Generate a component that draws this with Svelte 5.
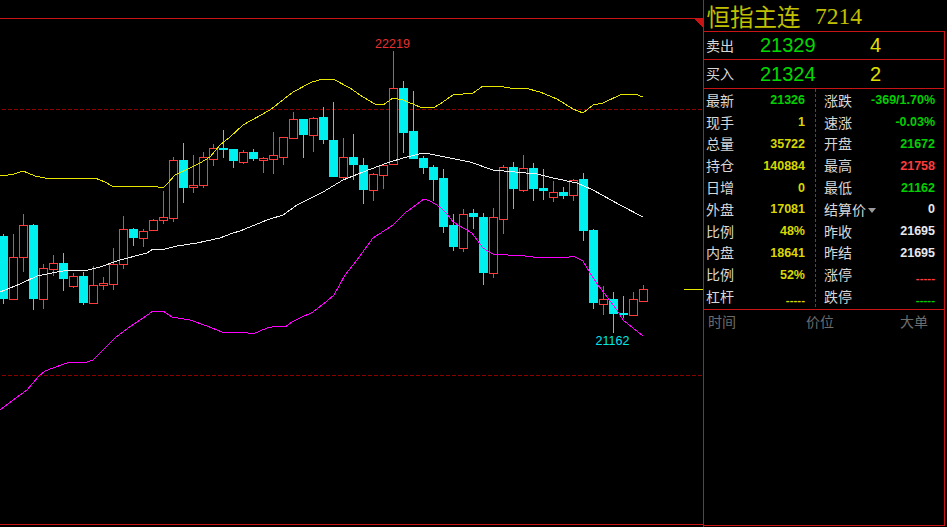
<script>
  // [x, isRed, wickTop, bodyTop, bodyBottom, wickBottom]
  const raw = [
    [3,0,234,236,299,304],[13,1,234,257,299,300],[23,1,214,225,257,272],[33,0,224,225,299,310],
    [43,1,264,268,299,309],[53,1,255,263,269,276],[63,0,253,263,279,291],[73,1,273,276,286,288],
    [83,0,272,276,303,305],[93,1,266,285,303,304],[103,1,277,283,285,290],[113,1,248,264,284,290],
    [123,1,216,229,264,269],[133,0,228,229,238,246],[143,1,229,231,238,247],[153,1,219,220,230,230],
    [163,1,191,217,220,224],[173,1,157,160,218,222],[183,0,143,160,188,203],[193,1,155,185,187,193],
    [203,1,152,157,185,188],[213,1,144,148,159,166],[223,0,130,148,150,158],[233,0,149,149,161,168],
    [243,1,150,152,162,164],[253,0,149,152,159,161],[263,1,157,158,160,173],[273,1,132,155,159,174],
    [283,1,137,137,157,165],[293,1,112,119,138,138],[303,0,119,119,135,158],[313,1,117,118,135,152],
    [323,0,107,117,140,144],[333,0,102,140,177,177],[343,1,138,157,177,179],[353,0,134,157,165,180],
    [363,0,158,165,190,204],[373,1,173,174,190,201],[383,1,164,165,175,189],[393,1,51,88,164,164],
    [403,0,81,88,133,153],[413,0,91,131,159,159],[423,0,156,158,168,174],[433,0,165,167,180,201],
    [443,0,169,178,227,233],[453,0,214,225,247,251],[463,1,209,214,248,252],[473,0,209,213,217,229],
    [483,0,213,217,273,285],[493,1,208,217,273,278],[503,1,165,167,219,234],[513,0,162,167,189,209],
    [523,1,155,168,190,192],[533,0,163,168,189,201],[543,0,169,188,191,200],[553,1,181,192,197,202],
    [563,0,187,192,196,199],[573,1,179,180,195,201],[583,0,173,179,231,241],[593,0,229,230,303,309],
    [603,1,286,299,304,315],[613,0,292,299,314,333],[623,0,296,313,315,318],[633,1,292,299,315,315],
    [643,1,285,289,301,301]
  ];
  const candles = raw.map(([x, red, wt, bt, bb, wb]) => ({ x, red: !!red, wt, bt, bb, wb }));

  const yellow = "0,175 8,175 14,174 23,171 35,176 45,178 60,178 95,178 105,182 112,186 128,186 158,187 163,188 168,183 175,175 190,168 200,163 210,157 220,145 230,137 243,125 270,110 293,92 312,82 323,79 333,79 350,88 363,97 375,104 383,105 393,98 403,100 420,107 433,108 440,104 453,95 473,93 483,86 498,86 510,88 525,88 540,92 557,99 573,109 583,113 593,105 603,103 622,94 635,94 643,97";
  const white = "0,292 20,284 37,276 57,272 70,270 88,270 100,267 120,260 147,253 153,249 165,249 177,246 197,243 220,238 233,233 240,231 267,220 283,215 297,205 323,192 343,180 363,172 387,163 403,158 423,153 430,154 450,158 470,162 493,170 537,174 553,178 577,183 593,190 620,205 643,217";
  const magenta = "0,410 20,395 27,390 38,377 45,371 53,368 67,363 87,362 93,360 108,345 115,338 128,328 143,318 153,311 163,311 172,317 190,320 207,326 222,332 248,333 253,334 267,328 278,326 285,327 292,322 300,318 313,312 327,301 334,295 345,275 357,260 373,238 393,225 405,213 424,199 430,201 440,207 448,215 453,222 472,233 483,248 493,254 508,255 525,256 540,258 548,257 565,258 573,256 583,261 590,273 598,285 617,310 623,320 643,336";

  const rows = [
    ["最新", "21326", "green", "涨跌", "-369/1.70%", "green"],
    ["现手", "1", "yellow", "速涨", "-0.03%", "green"],
    ["总量", "35722", "yellow", "开盘", "21672", "green"],
    ["持仓", "140884", "yellow", "最高", "21758", "red"],
    ["日增", "0", "yellow", "最低", "21162", "green"],
    ["外盘", "17081", "yellow", "结算价", "0", "white"],
    ["比例", "48%", "yellow", "昨收", "21695", "white"],
    ["内盘", "18641", "yellow", "昨结", "21695", "white"],
    ["比例", "52%", "yellow", "涨停", "-----", "red"],
    ["杠杆", "-----", "yellow", "跌停", "-----", "green"]
  ];
</script>

<div class="app">
  <svg class="chart" width="703" height="527" viewBox="0 0 703 527">
    <g class="crisp">
      <line x1="2" x2="703" y1="109.5" y2="109.5" class="grid" />
      <line x1="2" x2="703" y1="375.5" y2="375.5" class="grid" />
      <line x1="0" x2="694" y1="18.5" y2="18.5" class="frame" />
      <line x1="0" x2="703" y1="524.5" y2="524.5" class="frame" />
      <polygon points="693,18 703,18 703,28" class="corner" />
      <line x1="684" x2="703" y1="289.5" y2="289.5" class="tick" />
      {#each candles as c}
        <line x1={c.x + 0.5} x2={c.x + 0.5} y1={c.wt} y2={c.wb} class={c.red ? "wick-up" : "wick-down"} />
        {#if c.red}
          <rect x={c.x - 3.5} y={c.bt + 0.5} width="8" height={Math.max(1, c.bb - c.bt)} class="body-up" />
        {:else}
          <rect x={c.x - 4} y={c.bt} width="9" height={Math.max(2, c.bb - c.bt)} class="body-down" />
        {/if}
      {/each}
      <polyline points={yellow} class="band-y" />
      <polyline points={white} class="band-w" />
      <polyline points={magenta} class="band-m" />
    </g>
    <text x="392.5" y="48" class="peak">22219</text>
    <text x="612.5" y="345" class="low">21162</text>
  </svg>

  <aside class="side">
    <header class="title"><span class="name">恒指主连</span><span class="code">7214</span></header>
    <div class="box">
      <div class="quote">
        <span class="qlabel">卖出</span><span class="qprice">21329</span><span class="qvol">4</span>
      </div>
      <div class="quote buy">
        <span class="qlabel">买入</span><span class="qprice">21324</span><span class="qvol">2</span>
      </div>
      <div class="stats">
        {#each rows as r}
          <div class="cell left">
            <span class="label">{r[0]}</span>
            <span class="value {r[2]}" class:dash={r[1] === "-----"}>{r[1]}</span>
          </div>
          <div class="cell right">
            <span class="label">{r[3]}{#if r[3] === "结算价"}<i class="caret"></i>{/if}</span>
            <span class="value {r[5]}" class:dash={r[4] === "-----"}>{r[4]}</span>
          </div>
        {/each}
      </div>
      <div class="ticks"><span>时间</span><span>价位</span><span>大单</span></div>
    </div>
  </aside>
</div>

<style>
  :global(body) {
    margin: 0;
    background: #000;
  }
  .app {
    display: flex;
    width: 947px;
    height: 527px;
    overflow: hidden;
    background: #000;
    font-family: "Noto Sans CJK SC", "Liberation Sans", sans-serif;
  }
  .chart {
    display: block;
    flex: none;
  }
  .crisp {
    shape-rendering: crispEdges;
  }
  .grid {
    stroke: #8c0000;
    stroke-width: 1;
    stroke-dasharray: 4 2;
  }
  .frame {
    stroke: #c81414;
    stroke-width: 1;
  }
  .corner {
    fill: #c81414;
  }
  .tick {
    stroke: #e6e600;
    stroke-width: 1;
  }
  .wick-up {
    stroke: #ff3c3c;
    stroke-width: 1;
  }
  .wick-down {
    stroke: #00f0f0;
    stroke-width: 1;
  }
  .body-up {
    fill: #000;
    stroke: #ff3c3c;
    stroke-width: 1;
  }
  .body-down {
    fill: #00f0f0;
  }
  .band-y,
  .band-w,
  .band-m {
    fill: none;
    stroke-width: 1;
  }
  .band-y {
    stroke: #e6e600;
  }
  .band-w {
    stroke: #f0f0f0;
  }
  .band-m {
    stroke: #ff00ff;
  }
  .peak,
  .low {
    font-family: "Liberation Sans", sans-serif;
    font-size: 12.5px;
    text-anchor: middle;
  }
  .peak {
    fill: #e83030;
  }
  .low {
    fill: #00e8e8;
  }

  .side {
    flex: none;
    box-sizing: border-box;
    width: 244px;
    height: 527px;
    display: flex;
    flex-direction: column;
    border-left: 1px solid #c81414;
    color: #d8d8d8;
  }
  .title {
    flex: none;
    height: 31px;
    display: flex;
    align-items: center;
    padding: 1px 0 0 2.5px;
    box-sizing: border-box;
    gap: 14.5px;
    color: #c0c000;
  }
  .name {
    font-size: 23.5px;
    line-height: 30px;
    font-weight: 400;
    white-space: nowrap;
  }
  .code {
    font-family: "Liberation Serif", serif;
    font-size: 23.5px;
    line-height: 30px;
  }
  .box {
    flex: 1;
    display: flex;
    flex-direction: column;
    margin: 0 2px 1px 0;
    border: solid #c81414;
    border-width: 1px 1px 1px 0;
  }
  .quote {
    flex: none;
    box-sizing: border-box;
    height: 28px;
    display: flex;
    align-items: center;
    padding-left: 2px;
    border-bottom: 1px solid #c81414;
  }
  .buy {
    height: 29px;
  }
  .qlabel {
    width: 54px;
    font-size: 14px;
    line-height: 20px;
    padding-bottom: 2px;
  }
  .qprice {
    width: 110px;
    font: 20px "Liberation Sans", sans-serif;
    color: #00d800;
  }
  .qvol {
    font: 20px "Liberation Sans", sans-serif;
    color: #e0e000;
  }
  .stats {
    flex: none;
    height: 221px;
    box-sizing: border-box;
    padding-bottom: 2px;
    display: grid;
    grid-template-columns: 112px 1fr;
    grid-template-rows: repeat(10, 1fr);
    border-bottom: 1px solid #c81414;
    background: linear-gradient(#c01818 60%, transparent 0) 111px 0 / 1px 5px repeat-y;
  }
  .cell {
    display: flex;
    align-items: center;
    justify-content: space-between;
    min-width: 0;
  }
  .left {
    padding: 0 11px 0 2px;
  }
  .right {
    padding: 0 9px 0 8px;
  }
  .label {
    font-size: 14px;
    line-height: 20px;
    display: flex;
    align-items: center;
  }
  .value {
    font: bold 12.5px "Liberation Sans", sans-serif;
    padding-top: 1px;
  }
  .dash {
    font-size: 11.5px;
    padding-top: 8px;
  }
  .green {
    color: #00d000;
  }
  .yellow {
    color: #d8d800;
  }
  .red {
    color: #ff3c3c;
  }
  .white {
    color: #e8e8f0;
  }
  .caret {
    width: 0;
    height: 0;
    margin: 3px 0 0 2px;
    border: solid transparent;
    border-width: 5px 4.5px 0;
    border-top-color: #9a9a9a;
  }
  .ticks {
    display: grid;
    grid-template-columns: 98px 94px auto;
    padding: 1px 0 0 4px;
    font-size: 14px;
    line-height: 20px;
    color: #6c6c6c;
  }
</style>
